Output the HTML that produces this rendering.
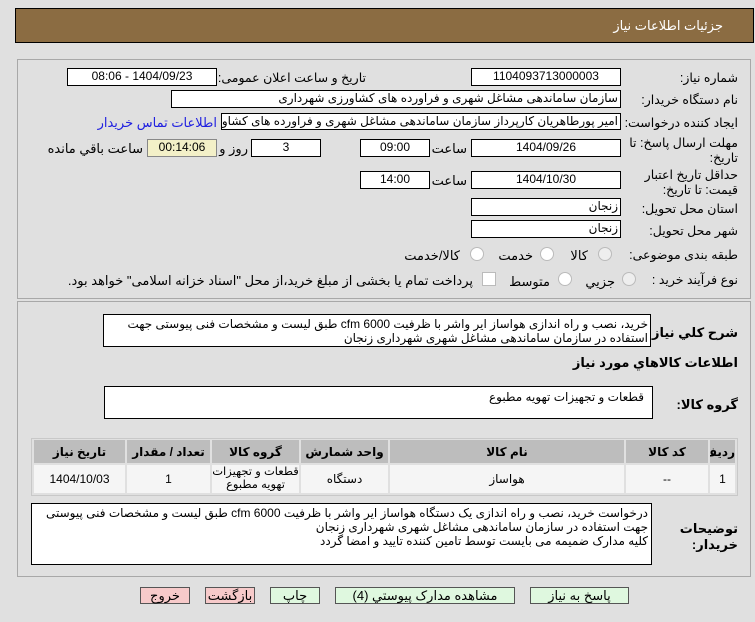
<!DOCTYPE html>
<html><head><meta charset="utf-8"><style>
body{margin:0;width:755px;height:622px;background:#e0e0e0;font-family:"Liberation Sans","DejaVu Sans",sans-serif;font-size:12px;color:#000;position:relative;overflow:hidden}
.a{position:absolute}
.b{position:absolute;background:#fff;border:1px solid #000;box-sizing:border-box;direction:rtl;white-space:nowrap;overflow:hidden;line-height:15px}
.c{text-align:center}
.l{position:absolute;direction:rtl;white-space:nowrap;text-align:right;font-size:12.5px}
.bold{font-weight:bold}
.btn{position:absolute;top:587px;height:17px;border:1px solid #555;box-sizing:border-box;text-align:center;line-height:15px;font-size:13px;background:#dff8df}
.pk{background:#f7caca}
table{border-collapse:separate;border-spacing:2px;table-layout:fixed}
td{text-align:center;direction:rtl;font-size:12px;padding:0;overflow:hidden}
</style></head><body>
<div class="a" style="left:15px;top:8px;width:739px;height:35px;background:#8b6c42;border:1px solid #000;box-sizing:border-box"></div>
<div class="l" style="right:32px;top:18px;color:#fff;font-size:13px">جزئیات اطلاعات نیاز</div>

<div class="a" style="left:17px;top:59px;width:734px;height:240px;border:1px solid #a8a8a8;box-sizing:border-box"></div>
<div class="a" style="left:17px;top:301px;width:734px;height:276px;border:1px solid #a8a8a8;box-sizing:border-box"></div>

<div class="l" style="right:17px;top:70px">شماره نیاز:</div>
<div class="b c" style="left:471px;top:68px;width:150px;height:18px">1104093713000003</div>
<div class="l" style="right:389px;top:70px">تاریخ و ساعت اعلان عمومی:</div>
<div class="b c" style="left:67px;top:68px;width:150px;height:18px">1404/09/23 - 08:06</div>

<div class="l" style="right:17px;top:92px">نام دستگاه خریدار:</div>
<div class="b" style="left:171px;top:90px;width:450px;height:18px;padding-right:2px">سازمان ساماندهی مشاغل شهری و فراورده های کشاورزی شهرداری</div>

<div class="l" style="right:17px;top:115px">ایجاد کننده درخواست:</div>
<div class="b" style="left:221px;top:113px;width:400px;height:17px;padding-right:2px">امیر پورطاهریان کارپرداز سازمان ساماندهی مشاغل شهری و فراورده های کشاورزی</div>
<div class="l" style="right:538px;top:115px;color:#2020e0;font-size:13px">اطلاعات تماس خریدار</div>

<div class="l" style="right:17px;top:136px;line-height:15px">مهلت ارسال پاسخ: تا<br>تاریخ:</div>
<div class="b c" style="left:471px;top:139px;width:150px;height:18px">1404/09/26</div>
<div class="l" style="right:288px;top:141px;font-size:13px">ساعت</div>
<div class="b c" style="left:360px;top:139px;width:70px;height:18px">09:00</div>
<div class="b c" style="left:251px;top:139px;width:70px;height:18px">3</div>
<div class="l" style="right:507px;top:141px;font-size:13px">روز و</div>
<div class="b c" style="left:147px;top:139px;width:70px;height:18px;background:#f3f0c8;border-color:#888">00:14:06</div>
<div class="l" style="right:612px;top:141px;font-size:13px">ساعت باقي مانده</div>

<div class="l" style="right:17px;top:168px;line-height:15px">حداقل تاریخ اعتبار<br>قیمت: تا تاریخ:</div>
<div class="b c" style="left:471px;top:171px;width:150px;height:18px">1404/10/30</div>
<div class="l" style="right:288px;top:173px;font-size:13px">ساعت</div>
<div class="b c" style="left:360px;top:171px;width:70px;height:18px">14:00</div>

<div class="l" style="right:17px;top:201px">استان محل تحویل:</div>
<div class="b" style="left:471px;top:198px;width:150px;height:18px;padding-right:2px">زنجان</div>
<div class="l" style="right:17px;top:223px">شهر محل تحویل:</div>
<div class="b" style="left:471px;top:220px;width:150px;height:18px;padding-right:2px">زنجان</div>

<div class="l" style="right:17px;top:247px">طبقه بندی موضوعی:</div>
<div class="a" style="left:598px;top:247px;width:12px;height:12px;border:1px solid #bbb;border-radius:50%;background:#eee"></div>
<div class="l" style="right:167px;top:248px;font-size:13px">کالا</div>
<div class="a" style="left:540px;top:247px;width:12px;height:12px;border:1px solid #bbb;border-radius:50%;background:#fff"></div>
<div class="l" style="right:222px;top:248px;font-size:13px">خدمت</div>
<div class="a" style="left:470px;top:247px;width:12px;height:12px;border:1px solid #bbb;border-radius:50%;background:#fff"></div>
<div class="l" style="right:295px;top:248px;font-size:13px">کالا/خدمت</div>

<div class="l" style="right:17px;top:272px">نوع فرآیند خرید :</div>
<div class="a" style="left:622px;top:272px;width:12px;height:12px;border:1px solid #bbb;border-radius:50%;background:#eee"></div>
<div class="l" style="right:140px;top:274px;font-size:13px">جزیي</div>
<div class="a" style="left:558px;top:272px;width:12px;height:12px;border:1px solid #bbb;border-radius:50%;background:#fff"></div>
<div class="l" style="right:205px;top:274px;font-size:13px">متوسط</div>
<div class="a" style="left:482px;top:272px;width:12px;height:12px;border:1px solid #bbb;background:#fff"></div>
<div class="l" style="right:282px;top:273px;font-size:13px">پرداخت تمام یا بخشی از مبلغ خرید،از محل "اسناد خزانه اسلامی" خواهد بود.</div>

<div class="l bold" style="right:17px;top:325px;font-size:13px">شرح کلي نياز:</div>
<div class="b" style="left:103px;top:314px;width:548px;height:33px;padding:2px 2px;line-height:14px;white-space:normal">خرید، نصب و راه اندازی  هواساز ایر واشر با ظرفیت cfm 6000  طبق لیست و مشخصات فنی پیوستی جهت استفاده در سازمان ساماندهی مشاغل شهری شهرداری زنجان</div>
<div class="l bold" style="right:17px;top:355px;font-size:13px">اطلاعات کالاهاي مورد نياز</div>

<div class="l bold" style="right:17px;top:397px;font-size:13px">گروه کالا:</div>
<div class="b" style="left:104px;top:386px;width:549px;height:33px;padding:3px 8px">قطعات و تجهیزات تهویه مطبوع</div>

<div class="a" style="left:31px;top:438px;width:707px;height:58px;border:1px solid #c8c8c8;box-sizing:border-box;background:#e0e0e0;overflow:hidden">
<table style="width:705px;direction:rtl;margin:-1px 0 0 0">
<colgroup><col style="width:25px"><col style="width:82px"><col style="width:234px"><col style="width:87px"><col style="width:87px"><col style="width:83px"><col></colgroup>
<tr style="background:#bdbdbd;height:23px;font-weight:bold">
<td>ردیف</td><td>کد کالا</td><td>نام کالا</td><td>واحد شمارش</td><td>گروه کالا</td><td>تعداد / مقدار</td><td>تاریخ نیاز</td></tr>
<tr style="background:#f5f5f5;height:28px">
<td>1</td><td>--</td><td>هواساز</td><td>دستگاه</td><td style="line-height:13px;font-size:11.5px">قطعات و تجهیزات<br>تهویه مطبوع</td><td>1</td><td>1404/10/03</td></tr>
</table></div>

<div class="l bold" style="right:17px;top:521px;font-size:13px;line-height:16px">توضیحات<br>خریدار:</div>
<div class="b" style="left:31px;top:503px;width:621px;height:62px;padding:2px 3px;line-height:14px;white-space:normal">درخواست خرید، نصب و راه اندازی یک دستگاه هواساز ایر واشر با ظرفیت cfm 6000  طبق لیست و مشخصات فنی پیوستی جهت استفاده در سازمان ساماندهی مشاغل شهری شهرداری زنجان<br>کلیه مدارک ضمیمه می بایست توسط تامین کننده تایید و امضا گردد</div>

<div class="btn pk" style="left:140px;width:50px">خروج</div>
<div class="btn pk" style="left:205px;width:50px">بازگشت</div>
<div class="btn" style="left:270px;width:50px">چاپ</div>
<div class="btn" style="left:335px;width:180px">مشاهده مدارک پیوستي (4)</div>
<div class="btn" style="left:530px;width:99px">پاسخ به نیاز</div>
</body></html>
